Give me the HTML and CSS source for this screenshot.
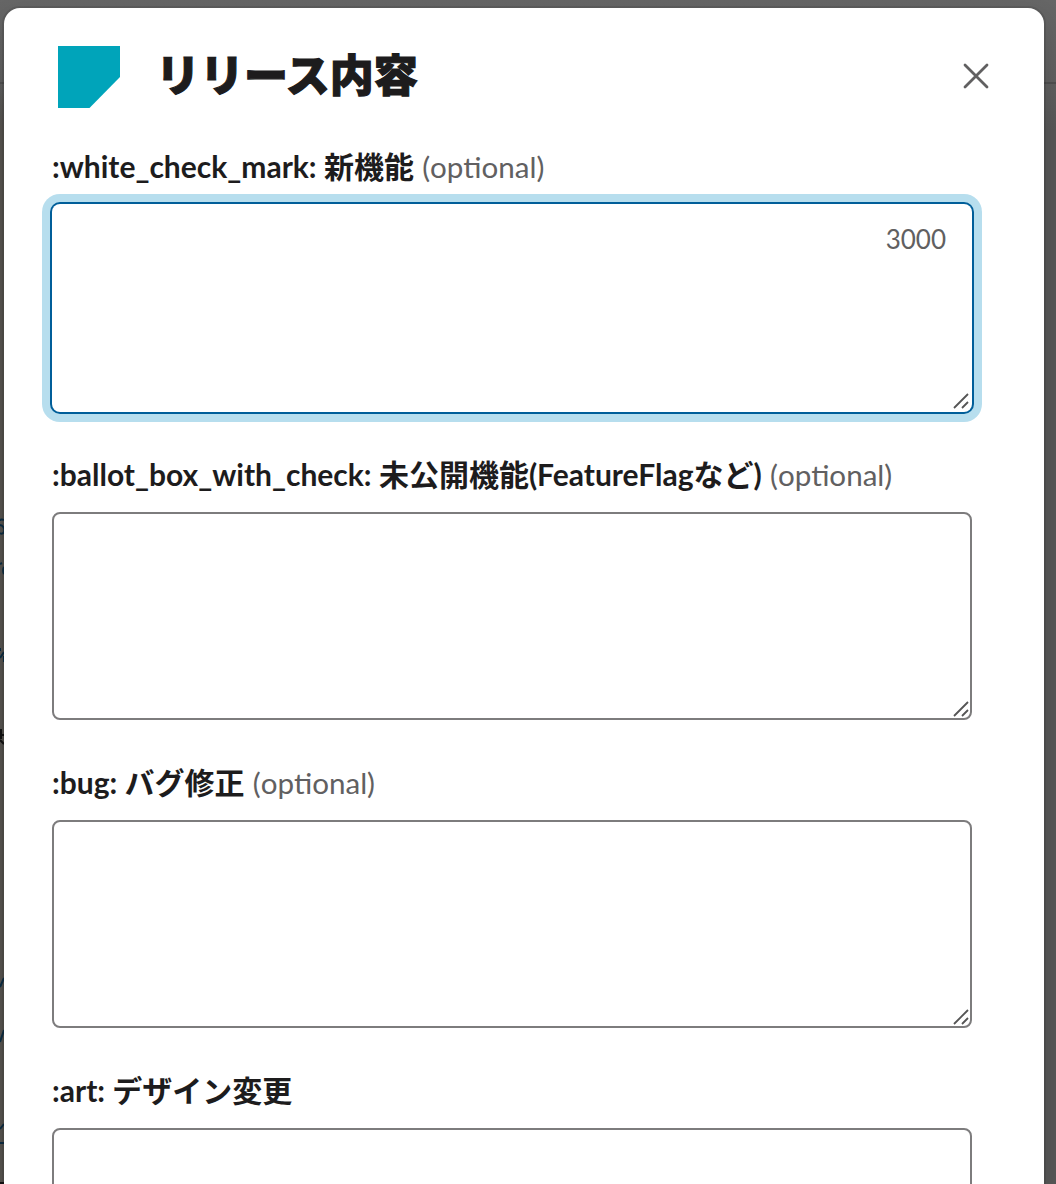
FILE: index.html
```
<!DOCTYPE html>
<html lang="ja">
<head>
  <meta charset="UTF-8">
  <meta name="viewport" content="width=device-width, initial-scale=1.0">
  <title>リリース内容</title>
  <link rel="stylesheet" href="styles.css">
</head>
<body>
  <!-- dimmed channel behind the dialog -->
  <svg class="backdrop" width="4" height="1184" viewBox="0 0 4 1184" fill="none" aria-hidden="true">
    <g stroke="#0b2c42" stroke-width="2">
      <path d="M4 520C2 519 0 519.500 0 521M0 525C4 526 5 529 4 532C3 534 1 534 0 533"/>
      <path d="M0 564L2 563M4 567C3 569 3 572 4 574"/>
      <path d="M0 648V651M4 652L0 658M4 656V662"/>
      <path d="M4 978L0 987M4 1030L0 1042M4 1124L0 1129M0 1143H4"/>
    </g>
    <path stroke="#111" stroke-width="2" d="M0 735H4M1 729V739M0 740L4 744M0 1183H4"/>
  </svg>

  <div class="modal" role="dialog" aria-labelledby="modal-title">
    <header class="modal-header">
      <svg class="app-icon" width="62" height="62" viewBox="0 0 62 62" aria-hidden="true">
        <path fill="#00a4ba" d="M0 0H62V31L31.500 62H0Z"/>
      </svg>
      <h1 id="modal-title">リリース内容</h1>
      <button class="close" type="button" aria-label="Close">
        <svg width="26" height="26" viewBox="0 0 26 26" fill="none" stroke="#616061" stroke-width="2.800" stroke-linecap="round">
          <path d="M2 2L24 24M24 2L2 24"/>
        </svg>
      </button>
    </header>

    <form class="fields">
      <div class="field">
        <label for="feature">:white_check_mark: 新機能 <span class="optional">(optional)</span></label>
        <div class="input focused">
          <textarea id="feature"></textarea>
          <span class="count">3000</span>
          <svg class="grip" width="16" height="16" viewBox="0 0 16 16"><path d="M1 15L15 1M9 15L15 9"/></svg>
        </div>
      </div>
      <div class="field">
        <label for="hidden-feature">:ballot_box_with_check: 未公開機能(FeatureFlagなど) <span class="optional">(optional)</span></label>
        <div class="input">
          <textarea id="hidden-feature"></textarea>
          <svg class="grip" width="16" height="16" viewBox="0 0 16 16"><path d="M1 15L15 1M9 15L15 9"/></svg>
        </div>
      </div>
      <div class="field">
        <label for="bug">:bug: バグ修正 <span class="optional">(optional)</span></label>
        <div class="input">
          <textarea id="bug"></textarea>
          <svg class="grip" width="16" height="16" viewBox="0 0 16 16"><path d="M1 15L15 1M9 15L15 9"/></svg>
        </div>
      </div>
      <div class="field">
        <label for="design">:art: デザイン変更</label>
        <div class="input">
          <textarea id="design"></textarea>
        </div>
      </div>
    </form>
  </div>
</body>
</html>
```
FILE: styles.css
```
:root {
  --text: #1d1c1d;
  --muted: #616061;
  --border: #7d7c7d;
  --focus: #005e99;
  --focus-ring: #b7deee;
}
* { box-sizing: border-box; margin: 0; padding: 0; }
html { height: 100%; overflow: hidden; }
body {
  height: 1184px;
  overflow: hidden;
  padding: 8px 12px 0 4px;
  color: var(--text);
  font-family: Lato, "Noto Sans CJK JP", sans-serif;
  background:
    linear-gradient(#4e4e4e, #4e4e4e) 0 82px / 100% 2px no-repeat,
    linear-gradient(#666 0, #5e5e5e 82px, #565656 130px, #565656 100%);
}
.backdrop {
  position: absolute;
  left: 0;
  top: 0;
  background: linear-gradient(transparent 84px, #55524e 130px);
}
.modal {
  position: relative;
  height: 1176px;
  overflow: hidden;
  background: #fff;
  border-radius: 16px 16px 0 0;
  box-shadow: 0 0 0 2px rgba(29, 28, 29, 0.13), 0 8px 24px rgba(0, 0, 0, 0.12);
}
.modal-header { display: flex; align-items: center; height: 136px; padding: 2px 48px 0 54px; }
.modal-header h1 { flex: 1; margin-left: 36px; padding-bottom: 4px; font-size: 44px; font-weight: 900; line-height: 60px; -webkit-text-stroke: 1.2px var(--text); }
.close { display: flex; align-items: center; justify-content: center; width: 40px; height: 40px; margin-bottom: 2px; border: none; background: none; cursor: pointer; }
.fields { padding: 0 72px 0 48px; }
.field { height: 308px; }
.field label { display: block; height: 60px; font-size: 30px; font-weight: 700; line-height: 45px; white-space: nowrap; }
.optional { margin-left: 1px; color: var(--muted); font-size: 29.6px; font-weight: 400; }
.input { position: relative; height: 208px; }
.input textarea { display: block; width: 100%; height: 100%; padding: 16px 24px; border: 2px solid var(--border); border-radius: 8px; background: #fff; font: inherit; font-size: 30px; resize: none; outline: none; }
.field + .field label { height: 60px; }
.focused textarea { border-color: transparent; box-shadow: 0 0 0 2px var(--focus), 0 0 0 10px var(--focus-ring); }
.count { position: absolute; top: 18px; right: 26px; color: var(--muted); font-size: 26px; line-height: 34px; }
.grip { position: absolute; right: 3px; bottom: 3px; fill: none; stroke: #555; stroke-width: 1.8; }
```
